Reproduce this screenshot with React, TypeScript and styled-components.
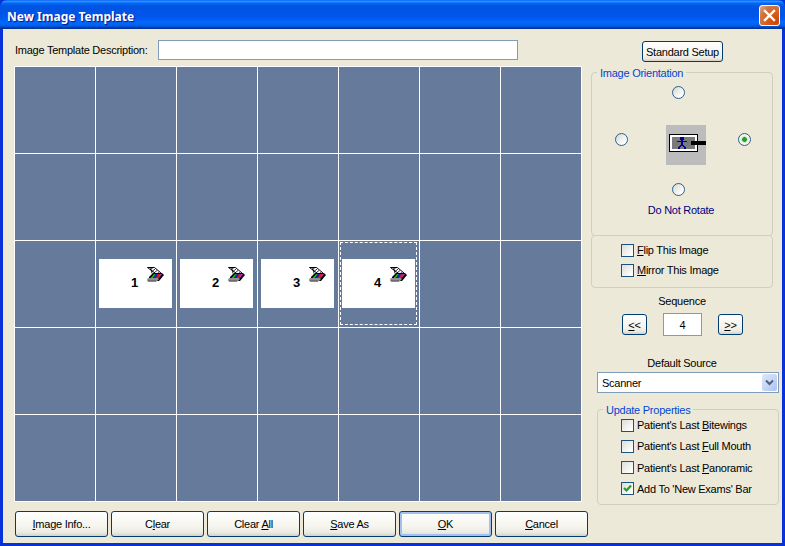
import React from 'react';
import styled, { createGlobalStyle } from 'styled-components';

const GlobalStyle = createGlobalStyle`
    html, body {
        margin: 0;
        padding: 0;
        overflow: hidden;
        background: #0831d9;
    }
    * {
        box-sizing: border-box;
    }
`;

const FONT = `"Liberation Sans", Arial, sans-serif`;
const ROWS = 5;
const COLS = 7;

const SLOTS = [
    { row: 2, col: 1, num: 1 },
    { row: 2, col: 2, num: 2 },
    { row: 2, col: 3, num: 3 },
    { row: 2, col: 4, num: 4, selected: true }
];

const ScannerIcon: React.FC = () => (
    <ScannerSvg viewBox="0 0 17 15" width="17" height="15">
        <path d="M.5.5h7l7 6h-6z" fill="#fff" stroke="#000" />
        <path d="M3.5.5l1.500 6M6 .5L3 3M8 2L5 4.500M10 3.500L7 6M12 5.500L9.500 7" stroke="#000" strokeWidth=".8" fill="none" />
        <path d="M2 10l4-4h9l2 2-5 6H2z" fill="#000" />
        <path d="M3.500 11l3.500-4h2l-3 4z" fill="#14b814" />
        <path d="M6 11l3-4h2l-2.500 4z" fill="#1020e0" />
        <path d="M8.500 11L11 7h1.500l-1 4z" fill="#e01818" />
        <path d="M11.500 11l1-4H15l-3 4z" fill="#d020d0" />
        <path d="M0 12.500L1 11h10l1 1-2.500 2.500H1l-1-1z" fill="#8f8f8f" />
        <path d="M1 13.500h8v1H1z" fill="#4a4a4a" />
    </ScannerSvg>
);

const OrientationIcon: React.FC = () => (
    <svg viewBox="0 0 40 40" width="40" height="40" shapeRendering="crispEdges">
        <rect width="40" height="40" fill="#bcbcbc" />
        <rect x="3" y="9" width="29" height="18" fill="#000" />
        <rect x="4" y="10" width="27" height="16" fill="#fff" />
        <rect x="6" y="12" width="23" height="12" fill="#7a7a7a" />
        <rect x="25" y="16" width="15" height="4" fill="#000" />
        <path d="M14 12h4v3h-4zM15 15h2v5h-2zM11 16h10v1H11zM14 20h4v1h-4zM13 21h2v1h-2zM17 21h2v1h-2zM12 22h2v2h-2zM18 22h2v2h-2z" fill="#00009c" />
    </svg>
);

export default function App(): React.ReactElement {
    const cells = [];
    for (let row = 0; row < ROWS; row++) {
        for (let col = 0; col < COLS; col++) {
            const slot = SLOTS.find(s => s.row === row && s.col === col);
            cells.push(
                <Cell key={`${row}-${col}`}>
                    {slot && <Card>
                        <CardNumber>{slot.num}</CardNumber>
                        <ScannerIcon />
                    </Card>}
                    {slot && slot.selected && <SelectionBox />}
                </Cell>
            );
        }
    }

    return (
        <>
            <GlobalStyle />
            <Window>
                <TitleBar>
                    <TitleText>New Image Template</TitleText>
                    <CloseButton>
                        <svg viewBox="0 0 13 13" width="13" height="13">
                            <path d="M2 2l9 9M11 2l-9 9" stroke="#fff" strokeWidth="2.4" strokeLinecap="square" />
                        </svg>
                    </CloseButton>
                </TitleBar>
                <Body>
                    <LeftColumn>
                        <DescriptionRow>
                            <DescriptionLabel>Image Template Description:</DescriptionLabel>
                            <DescriptionInput />
                        </DescriptionRow>
                        <TemplateGrid>{cells}</TemplateGrid>
                        <ButtonRow>
                            <ActionButton><u>I</u>mage Info...</ActionButton>
                            <ActionButton>C<u>l</u>ear</ActionButton>
                            <ActionButton>Clear <u>A</u>ll</ActionButton>
                            <ActionButton><u>S</u>ave As</ActionButton>
                            <ActionButton $focused><u>O</u>K</ActionButton>
                            <ActionButton><u>C</u>ancel</ActionButton>
                        </ButtonRow>
                    </LeftColumn>
                    <RightColumn>
                        <SetupButton>Standard Setup</SetupButton>
                        <OrientationGroup>
                            <GroupLegend>Image Orientation</GroupLegend>
                            <TopRadio />
                            <OrientationRow>
                                <Radio />
                                <OrientationIcon />
                                <Radio $checked />
                            </OrientationRow>
                            <BottomRadio />
                            <RotateLabel>Do Not Rotate</RotateLabel>
                        </OrientationGroup>
                        <FlipGroup>
                            <CheckRow><CheckBox /><span><u>F</u>lip This Image</span></CheckRow>
                            <CheckRow><CheckBox /><span><u>M</u>irror This Image</span></CheckRow>
                        </FlipGroup>
                        <SequenceLabel>Sequence</SequenceLabel>
                        <SequenceRow>
                            <SequenceButton><u>&lt;</u>&lt;</SequenceButton>
                            <SequenceInput readOnly value="4" />
                            <SequenceButton><u>&gt;</u>&gt;</SequenceButton>
                        </SequenceRow>
                        <SourceLabel>Default Source</SourceLabel>
                        <SourceSelect>
                            <span>Scanner</span>
                            <SelectArrow>
                                <svg viewBox="0 0 9 7" width="9" height="7">
                                    <path d="M1 1.500l3.500 3.500L8 1.500" fill="none" stroke="#4d6185" strokeWidth="2" />
                                </svg>
                            </SelectArrow>
                        </SourceSelect>
                        <UpdateGroup>
                            <GroupLegend>Update Properties</GroupLegend>
                            <CheckRow><CheckBox /><span>Patient's Last <u>B</u>itewings</span></CheckRow>
                            <CheckRow><CheckBox /><span>Patient's Last <u>F</u>ull Mouth</span></CheckRow>
                            <CheckRow><CheckBox /><span>Patient's Last <u>P</u>anoramic</span></CheckRow>
                            <CheckRow>
                                <CheckBox>
                                    <svg viewBox="0 0 11 11" width="11" height="11">
                                        <path d="M2 5l2.500 2.500L9 2.500" fill="none" stroke="#21a121" strokeWidth="2.2" />
                                    </svg>
                                </CheckBox>
                                <span>Add To 'New Exams' Bar</span>
                            </CheckRow>
                        </UpdateGroup>
                    </RightColumn>
                </Body>
            </Window>
        </>
    );
}

const Window = styled.div`
    width: 785px;
    height: 546px;
    display: flex;
    flex-direction: column;
    font-family: ${FONT};
    font-size: 11px;
    letter-spacing: -0.25px;
    color: #000;
    background: #0831d9;
    border-radius: 7px 7px 0 0;
    overflow: hidden;
`;

const TitleBar = styled.div`
    height: 29px;
    flex: none;
    display: flex;
    align-items: center;
    justify-content: space-between;
    padding: 0 5px 0 7px;
    background: linear-gradient(180deg, #0058ee 0%, #3593ff 4%, #288eff 6%, #127dff 8%, #036ffc 10%, #0262ee 14%, #0057e5 20%, #0054e3 24%, #0055eb 56%, #005bf5 66%, #026afe 76%, #0062ef 86%, #0052d6 92%, #0040ab 94%, #003092 100%);
`;

const TitleText = styled.div`
    margin-top: 3px;
    font-family: "Noto Sans", ${FONT};
    font-weight: 700;
    font-size: 12px;
    letter-spacing: 0;
    color: #fff;
    text-shadow: 1px 1px 1px #0f1089;
`;

const CloseButton = styled.div`
    width: 21px;
    height: 21px;
    margin-top: 1px;
    display: flex;
    align-items: center;
    justify-content: center;
    border: 1px solid #fff;
    border-radius: 3px;
    background: radial-gradient(circle at 85% 85%, #cc4600 0%, #dc6527 55%, #cd7546 70%, #e8a98a 100%);
`;

const Body = styled.div`
    flex: 1;
    display: flex;
    margin: 0 3px 3px;
    padding-left: 11px;
    background: #ece9d8;
`;

const LeftColumn = styled.div`
    width: 577px;
    padding-top: 11px;
    display: flex;
    flex-direction: column;
`;

const DescriptionRow = styled.div`
    height: 20px;
    display: flex;
    align-items: center;
    padding-left: 1px;
    white-space: nowrap;
`;

const DescriptionLabel = styled.span`
    width: 143px;
`;

const DescriptionInput = styled.input`
    width: 360px;
    height: 20px;
    padding: 0 3px;
    border: 1px solid #7f9db9;
    background: #fff;
    outline: none;
`;

const TemplateGrid = styled.div`
    margin-top: 6px;
    width: 568px;
    height: 436px;
    padding: 1px;
    display: grid;
    grid-template-columns: repeat(${COLS}, 80px);
    grid-template-rows: repeat(${ROWS}, 86px);
    gap: 1px;
    background: #fff;
`;

const Cell = styled.div`
    position: relative;
    padding: 18px 0 0 3px;
    background: #667a9b;
`;

const Card = styled.div`
    width: 73px;
    height: 49px;
    display: flex;
    align-items: flex-start;
    padding: 8px 0 0 30px;
    background: #fff;
`;

const CardNumber = styled.div`
    width: 18px;
    margin-top: 9px;
    font-weight: 700;
    font-size: 13px;
    letter-spacing: 0;
    line-height: 14px;
    padding-left: 2px;
`;

const ScannerSvg = styled.svg`
    flex: none;
`;

const SelectionBox = styled.div`
    position: absolute;
    left: 1px;
    top: 1px;
    right: 2px;
    bottom: 2px;
    border: 1px dashed #fff;
`;

const ButtonRow = styled.div`
    margin-top: 9px;
    padding-left: 1px;
    display: flex;
    gap: 3px;
`;

const XpButton = styled.button<{ $focused?: boolean }>`
    padding: 0;
    font-family: ${FONT};
    font-size: 11px;
    letter-spacing: -0.25px;
    white-space: nowrap;
    color: #000;
    border: 1px solid #003c74;
    border-radius: 3px;
    background: linear-gradient(180deg, #ffffff 0%, #f5f4ee 60%, #ecebe3 85%, #d6d0c5 100%);
    box-shadow: ${p => p.$focused ? 'inset 0 0 0 2px #a3bfee' : 'none'};
`;

const ActionButton = styled(XpButton)`
    width: 93px;
    height: 26px;
`;

const RightColumn = styled.div`
    width: 188px;
    padding-top: 12px;
    display: flex;
    flex-direction: column;
`;

const SetupButton = styled(XpButton)`
    align-self: flex-start;
    margin-left: 51px;
    width: 81px;
    height: 21px;
`;

const Group = styled.div`
    position: relative;
    border: 1px solid #d0d0bf;
    border-radius: 4px;
`;

const GroupLegend = styled.div`
    position: absolute;
    left: 5px;
    top: -6px;
    padding: 0 3px;
    line-height: 13px;
    color: #0046d5;
    background: #ece9d8;
`;

const OrientationGroup = styled(Group)`
    margin-top: 10px;
    width: 182px;
    height: 164px;
    display: flex;
    flex-direction: column;
`;

const Radio = styled.div<{ $checked?: boolean }>`
    flex: none;
    width: 13px;
    height: 13px;
    border-radius: 50%;
    border: 1px solid #2d5f8f;
    background: ${p => p.$checked
        ? 'radial-gradient(circle, #21a121 0 2px, #9fd89f 2.5px, #f4f4ee 3.5px)'
        : 'linear-gradient(135deg, #d6d6ce 0%, #ffffff 80%)'};
`;

const TopRadio = styled(Radio)`
    margin: 13px 0 0 80px;
`;

const OrientationRow = styled.div`
    margin-top: 26px;
    padding: 8px 21px 0 23px;
    height: 40px;
    display: flex;
    align-items: flex-start;
    justify-content: space-between;
    & > svg {
        margin: -8px 0 0 6px;
    }
`;

const BottomRadio = styled(Radio)`
    margin: 18px 0 0 80px;
`;

const RotateLabel = styled.div`
    margin-top: 7px;
    text-align: center;
    line-height: 14px;
    color: #000080;
    padding-right: 2px;
`;

const FlipGroup = styled(Group)`
    margin-top: -1px;
    width: 182px;
    height: 53px;
    padding-top: 7px;
    display: flex;
    flex-direction: column;
    gap: 6px;
`;

const CheckRow = styled.div`
    padding-left: 29px;
    height: 14px;
    display: flex;
    align-items: center;
    gap: 3px;
    white-space: nowrap;
`;

const CheckBox = styled.div`
    flex: none;
    width: 13px;
    height: 13px;
    display: flex;
    align-items: center;
    justify-content: center;
    border: 1px solid #1c5180;
    background: linear-gradient(135deg, #dcdcd7 0%, #ffffff 90%);
`;

const CenterLabel = styled.div`
    width: 182px;
    text-align: center;
    line-height: 14px;
`;

const SequenceLabel = styled(CenterLabel)`
    margin-top: 6px;
`;

const SequenceRow = styled.div`
    margin-top: 5px;
    padding-left: 31px;
    display: flex;
    align-items: center;
    gap: 16px;
`;

const SequenceButton = styled(XpButton)`
    width: 25px;
    height: 21px;
`;

const SequenceInput = styled.input`
    width: 39px;
    height: 23px;
    padding: 0;
    text-align: center;
    font-family: ${FONT};
    font-size: 11px;
    border: 1px solid #7f9db9;
    background: #fff;
    outline: none;
`;

const SourceLabel = styled(CenterLabel)`
    margin-top: 20px;
`;

const SourceSelect = styled.div`
    margin: 2px 0 0 6px;
    width: 182px;
    height: 21px;
    display: flex;
    align-items: center;
    justify-content: space-between;
    padding: 1px 1px 1px 4px;
    border: 1px solid #7f9db9;
    background: #fff;
`;

const SelectArrow = styled.div`
    width: 15px;
    height: 17px;
    display: flex;
    align-items: center;
    justify-content: center;
    border-radius: 2px;
    background: linear-gradient(135deg, #dfe7f8 0%, #c3d3f5 60%, #aebff0 100%);
`;

const UpdateGroup = styled(Group)`
    margin: 16px 0 0 6px;
    width: 182px;
    height: 96px;
    padding-top: 8px;
    display: flex;
    flex-direction: column;
    gap: 7.3px;
    & > ${CheckRow} {
        padding-left: 23px;
    }
`;
